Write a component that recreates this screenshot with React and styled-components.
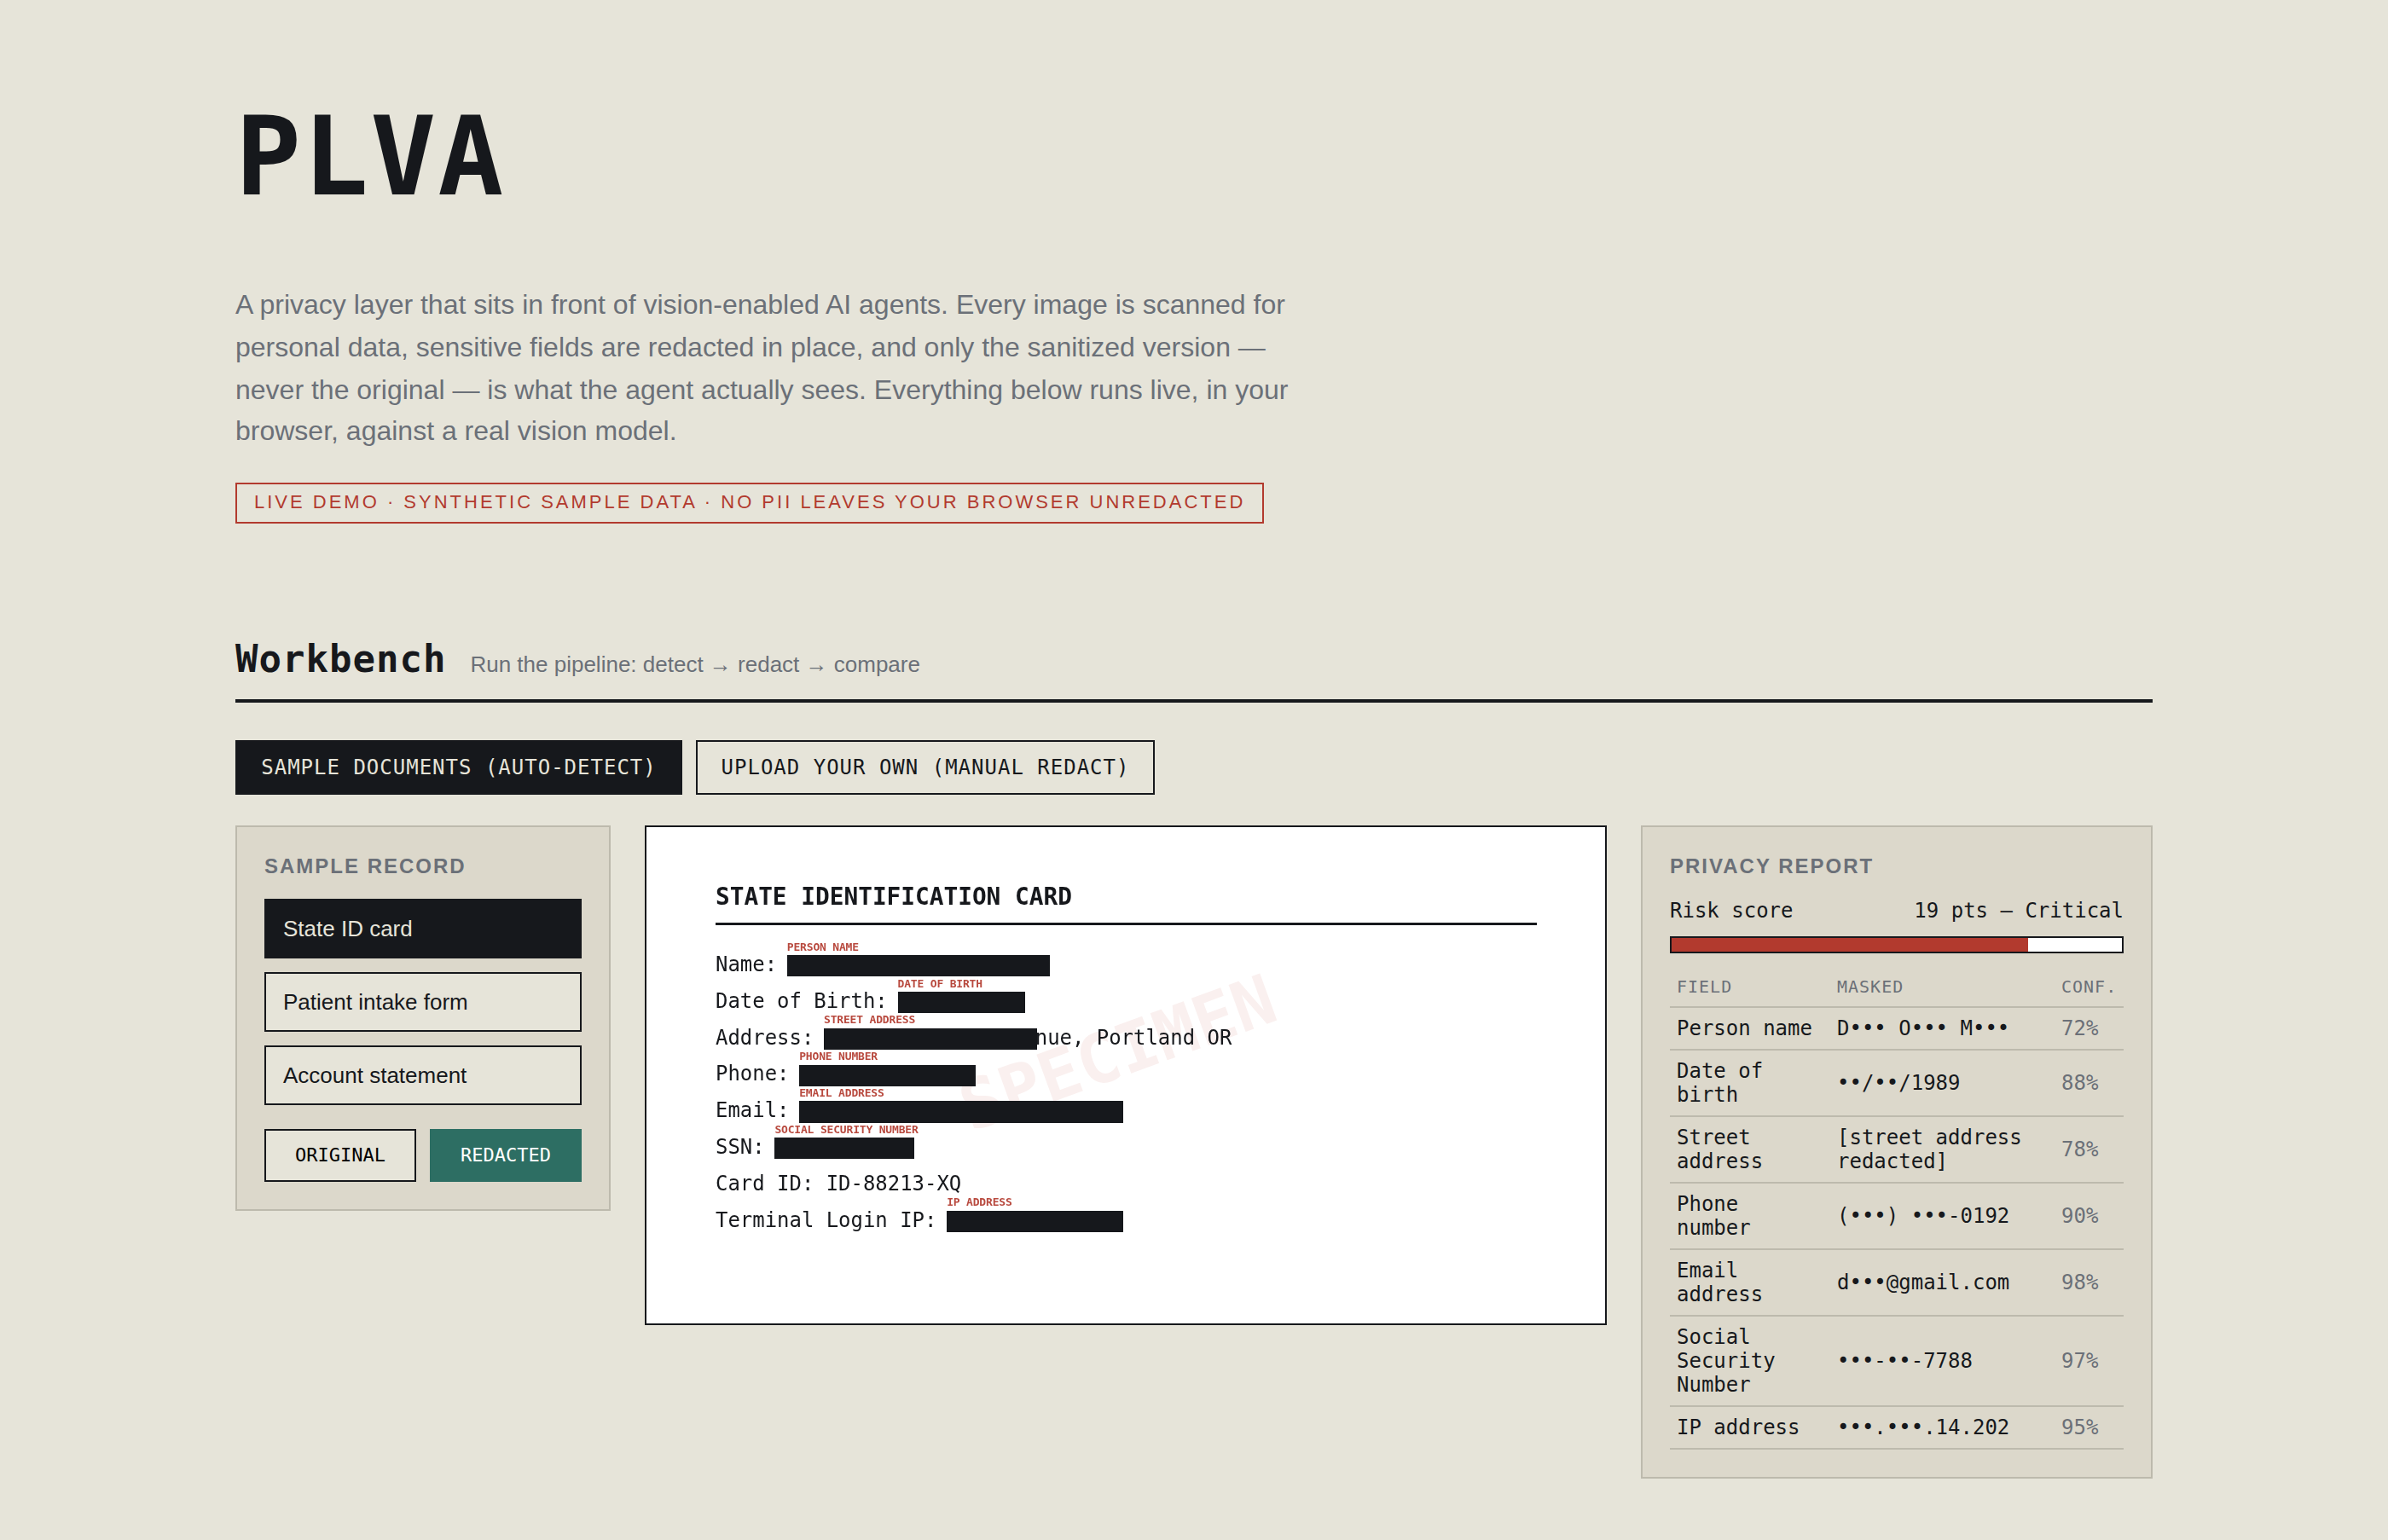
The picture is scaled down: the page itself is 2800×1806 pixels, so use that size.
import React, { useState } from "react";
import styled, { createGlobalStyle, ThemeProvider } from "styled-components";

const theme = {
  paper: "#e6e4d9",
  panel: "#dcd8cb",
  line: "#bdbaad",
  ink: "#16181c",
  muted: "#6b7078",
  red: "#b23a2e",
  green: "#2d6e63",
  sans: `"Liberation Sans", Arial, sans-serif`,
  mono: `"DejaVu Sans Mono", monospace`,
};

const GlobalStyle = createGlobalStyle`
  * { box-sizing: border-box; }
  body {
    margin: 0;
    background: ${theme.paper};
    color: ${theme.ink};
    font-family: ${theme.sans};
  }
  h1, h2, h3, p { margin: 0; }
`;

const Page = styled.main`
  width: 2248px;
  min-height: 1806px;
  margin: 0 auto;
  padding-top: 120px;
`;

const Title = styled.h1`
  font: 700 128px/128px ${({ theme }) => theme.mono};
  letter-spacing: 2px;
`;

const Lede = styled.p`
  margin-top: 84px;
  font-size: 32px;
  line-height: 50px;
  color: ${({ theme }) => theme.muted};
  white-space: nowrap;
`;

const LedeLine = styled.span`
  display: block;

  &:last-child {
    margin-top: -2px;
  }
`;

const Notice = styled.div`
  width: fit-content;
  height: 48px;
  margin-top: 36px;
  padding: 7px 20px 0;
  border: 2px solid ${({ theme }) => theme.red};
  color: ${({ theme }) => theme.red};
  font-size: 22px;
  line-height: 27px;
  letter-spacing: 3px;
  text-transform: uppercase;
  white-space: nowrap;
`;

const SectionHead = styled.header`
  display: flex;
  align-items: baseline;
  gap: 28px;
  margin-top: 133px;
  padding-bottom: 22px;
  border-bottom: 4px solid ${({ theme }) => theme.ink};
`;

const SectionTitle = styled.h2`
  font: 700 44px/51px ${({ theme }) => theme.mono};
  letter-spacing: 1px;
`;

const SectionNote = styled.span`
  font-size: 26px;
  line-height: 30px;
  color: ${({ theme }) => theme.muted};
`;

const Tabs = styled.div`
  display: flex;
  gap: 16px;
  margin-top: 44px;
`;

const Tab = styled.button`
  width: ${({ $width }) => $width};
  height: 64px;
  padding: 0;
  border: 2px solid ${({ theme }) => theme.ink};
  background: ${({ theme, $active }) => ($active ? theme.ink : "transparent")};
  color: ${({ theme, $active }) => ($active ? theme.paper : theme.ink)};
  font: 24px/28px ${({ theme }) => theme.mono};
  letter-spacing: 1px;
  text-transform: uppercase;
  white-space: nowrap;
  cursor: pointer;
`;

const Bench = styled.div`
  display: grid;
  grid-template-columns: 440px 1fr 600px;
  gap: 40px;
  align-items: start;
  margin-top: 36px;
`;

const Panel = styled.section`
  padding: 32px;
  border: 2px solid ${({ theme }) => theme.line};
  background: ${({ theme }) => theme.panel};
`;

const PanelTitle = styled.h3`
  margin-bottom: 24px;
  font-size: 24px;
  line-height: 28px;
  letter-spacing: 2px;
  text-transform: uppercase;
  color: ${({ theme }) => theme.muted};
`;

const RecordList = styled.div`
  display: flex;
  flex-direction: column;
  gap: 16px;
`;

const RecordButton = styled.button`
  height: 70px;
  padding: 0 20px;
  border: 2px solid ${({ theme }) => theme.ink};
  background: ${({ theme, $active }) => ($active ? theme.ink : theme.paper)};
  color: ${({ theme, $active }) => ($active ? theme.paper : theme.ink)};
  font: 26px/30px ${({ theme }) => theme.sans};
  text-align: left;
  cursor: pointer;
`;

const ViewToggle = styled.div`
  display: grid;
  grid-template-columns: 1fr 1fr;
  gap: 16px;
  margin-top: 28px;
`;

const ViewButton = styled.button`
  height: 62px;
  padding: 0;
  border: 2px solid ${({ theme, $active }) => ($active ? theme.green : theme.ink)};
  background: ${({ theme, $active }) => ($active ? theme.green : theme.paper)};
  color: ${({ $active }) => ($active ? "#fff" : "#000")};
  font: 22px/26px ${({ theme }) => theme.mono};
  text-transform: uppercase;
  cursor: pointer;
`;

const Sheet = styled.article`
  position: relative;
  height: 586px;
  padding: 65px 80px 0 81px;
  overflow: hidden;
  border: 2px solid ${({ theme }) => theme.ink};
  background: #fff;
  font-family: ${({ theme }) => theme.mono};
`;

// turned around the middle of its own baseline, which sits on the sheet's centre
const Watermark = styled.div`
  position: absolute;
  top: 50%;
  left: 50%;
  font-size: 80.3px;
  font-weight: 700;
  line-height: 80px;
  color: #faf0ef;
  transform-origin: 0 0;
  transform: rotate(-20deg) translate(-50%, -68px);
`;

const SheetBody = styled.div`
  position: relative;
  will-change: transform;
`;

const SheetTitle = styled.h3`
  padding-bottom: 14.4px;
  border-bottom: 3px solid ${({ theme }) => theme.ink};
  font-size: 27.77px;
  line-height: 33px;
`;

const SheetRows = styled.div`
  padding-top: 24.6px;
`;

const SheetRow = styled.div`
  display: flex;
  height: 42.83px;
  font-size: 23.95px;
  line-height: 42.83px;
  white-space: pre;
`;

const Redaction = styled.span`
  position: relative;
  z-index: 1;
  width: ${({ $chars }) => `calc(${$chars}ch + 5.4px)`};
  height: 25.2px;
  margin: 10.1px -2.7px 0;
  background: ${({ theme }) => theme.ink};
`;

const RedactionLabel = styled.span`
  position: absolute;
  bottom: calc(100% + 2.4px);
  left: 0;
  font-size: 13px;
  font-weight: 700;
  line-height: 15px;
  letter-spacing: -0.18px;
  text-transform: uppercase;
  color: ${({ theme }) => theme.red};
  opacity: 0.92;
`;

const Risk = styled.div`
  display: flex;
  justify-content: space-between;
  font: 24px/28px ${({ theme }) => theme.mono};
`;

const Meter = styled.div`
  height: 20px;
  margin: 16px 0 18px;
  border: 2px solid ${({ theme }) => theme.ink};
  background: #fff;
`;

const MeterFill = styled.div`
  height: 100%;
  background: ${({ theme }) => theme.red};
`;

const Findings = styled.table`
  width: 100%;
  table-layout: fixed;
  border-spacing: 0;
  font: 24px/28px ${({ theme }) => theme.mono};
`;

const Th = styled.th`
  width: ${({ $width }) => $width};
  padding: 9px 8px 11px;
  border-bottom: 2px solid ${({ theme }) => theme.line};
  font-size: 20px;
  font-weight: 400;
  line-height: 24px;
  letter-spacing: 1px;
  text-align: left;
  text-transform: uppercase;
  color: ${({ theme }) => theme.muted};
`;

const Td = styled.td`
  padding: 10px 8px;
  border-bottom: 2px solid ${({ theme }) => theme.line};
  color: ${({ theme, $muted }) => ($muted ? theme.muted : theme.ink)};
`;

const records = ["State ID card", "Patient intake form", "Account statement"];

const cardLines = [
  { text: "Name: ", label: "Person name", chars: 21 },
  { text: "Date of Birth: ", label: "Date of birth", chars: 10 },
  { text: "Address: ", label: "Street address", chars: 17, rest: "nue, Portland OR" },
  { text: "Phone: ", label: "Phone number", chars: 14 },
  { text: "Email: ", label: "Email address", chars: 26 },
  { text: "SSN: ", label: "Social Security Number", chars: 11 },
  { text: "Card ID: ID-88213-XQ" },
  { text: "Terminal Login IP: ", label: "IP address", chars: 14 },
];

const findings = [
  { field: "Person name", masked: "D••• O••• M•••", conf: 72 },
  { field: "Date of birth", masked: "••/••/1989", conf: 88 },
  { field: "Street address", masked: "[street address redacted]", conf: 78 },
  { field: "Phone number", masked: "(•••) •••-0192", conf: 90 },
  { field: "Email address", masked: "d•••@gmail.com", conf: 98 },
  { field: "Social Security Number", masked: "•••-••-7788", conf: 97 },
  { field: "IP address", masked: "•••.•••.14.202", conf: 95 },
];

const RISK_POINTS = 19;
const RISK_MAX = 24;

const App = () => {
  const [mode, setMode] = useState("samples");
  const [record, setRecord] = useState(records[0]);
  const [view, setView] = useState("redacted");

  return (
    <ThemeProvider theme={theme}>
      <GlobalStyle />
      <Page>
        <Title>PLVA</Title>
        <Lede>
          <LedeLine>A privacy layer that sits in front of vision-enabled AI agents. Every image is scanned for</LedeLine>
          <LedeLine>personal data, sensitive fields are redacted in place, and only the sanitized version —</LedeLine>
          <LedeLine>never the original — is what the agent actually sees. Everything below runs live, in your</LedeLine>
          <LedeLine>browser, against a real vision model.</LedeLine>
        </Lede>
        <Notice>Live demo · Synthetic sample data · No PII leaves your browser unredacted</Notice>

        <SectionHead>
          <SectionTitle>Workbench</SectionTitle>
          <SectionNote>Run the pipeline: detect → redact → compare</SectionNote>
        </SectionHead>

        <Tabs>
          <Tab $width="524px" $active={mode === "samples"} onClick={() => setMode("samples")}>
            Sample documents (auto-detect)
          </Tab>
          <Tab $width="538px" $active={mode === "upload"} onClick={() => setMode("upload")}>
            Upload your own (manual redact)
          </Tab>
        </Tabs>

        <Bench>
          <Panel>
            <PanelTitle>Sample record</PanelTitle>
            <RecordList>
              {records.map((name) => (
                <RecordButton key={name} $active={name === record} onClick={() => setRecord(name)}>
                  {name}
                </RecordButton>
              ))}
            </RecordList>
            <ViewToggle>
              <ViewButton $active={view === "original"} onClick={() => setView("original")}>Original</ViewButton>
              <ViewButton $active={view === "redacted"} onClick={() => setView("redacted")}>Redacted</ViewButton>
            </ViewToggle>
          </Panel>

          <Sheet>
            <Watermark>SPECIMEN</Watermark>
            <SheetBody>
              <SheetTitle>STATE IDENTIFICATION CARD</SheetTitle>
              <SheetRows>
                {cardLines.map((line) => (
                  <SheetRow key={line.text}>
                    <span>{line.text}</span>
                    {line.label && (
                      <Redaction $chars={line.chars}>
                        <RedactionLabel>{line.label}</RedactionLabel>
                      </Redaction>
                    )}
                    {line.rest && <span>{line.rest}</span>}
                  </SheetRow>
                ))}
              </SheetRows>
            </SheetBody>
          </Sheet>

          <Panel>
            <PanelTitle>Privacy report</PanelTitle>
            <Risk>
              <span>Risk score</span>
              <span>{RISK_POINTS} pts — Critical</span>
            </Risk>
            <Meter>
              <MeterFill style={{ width: `${(RISK_POINTS / RISK_MAX) * 100}%` }} />
            </Meter>
            <Findings>
              <thead>
                <tr>
                  <Th $width="188px">Field</Th>
                  <Th $width="263px">Masked</Th>
                  <Th>Conf.</Th>
                </tr>
              </thead>
              <tbody>
                {findings.map(({ field, masked, conf }) => (
                  <tr key={field}>
                    <Td>{field}</Td>
                    <Td>{masked}</Td>
                    <Td $muted>{conf}%</Td>
                  </tr>
                ))}
              </tbody>
            </Findings>
          </Panel>
        </Bench>
      </Page>
    </ThemeProvider>
  );
};

export default App;
